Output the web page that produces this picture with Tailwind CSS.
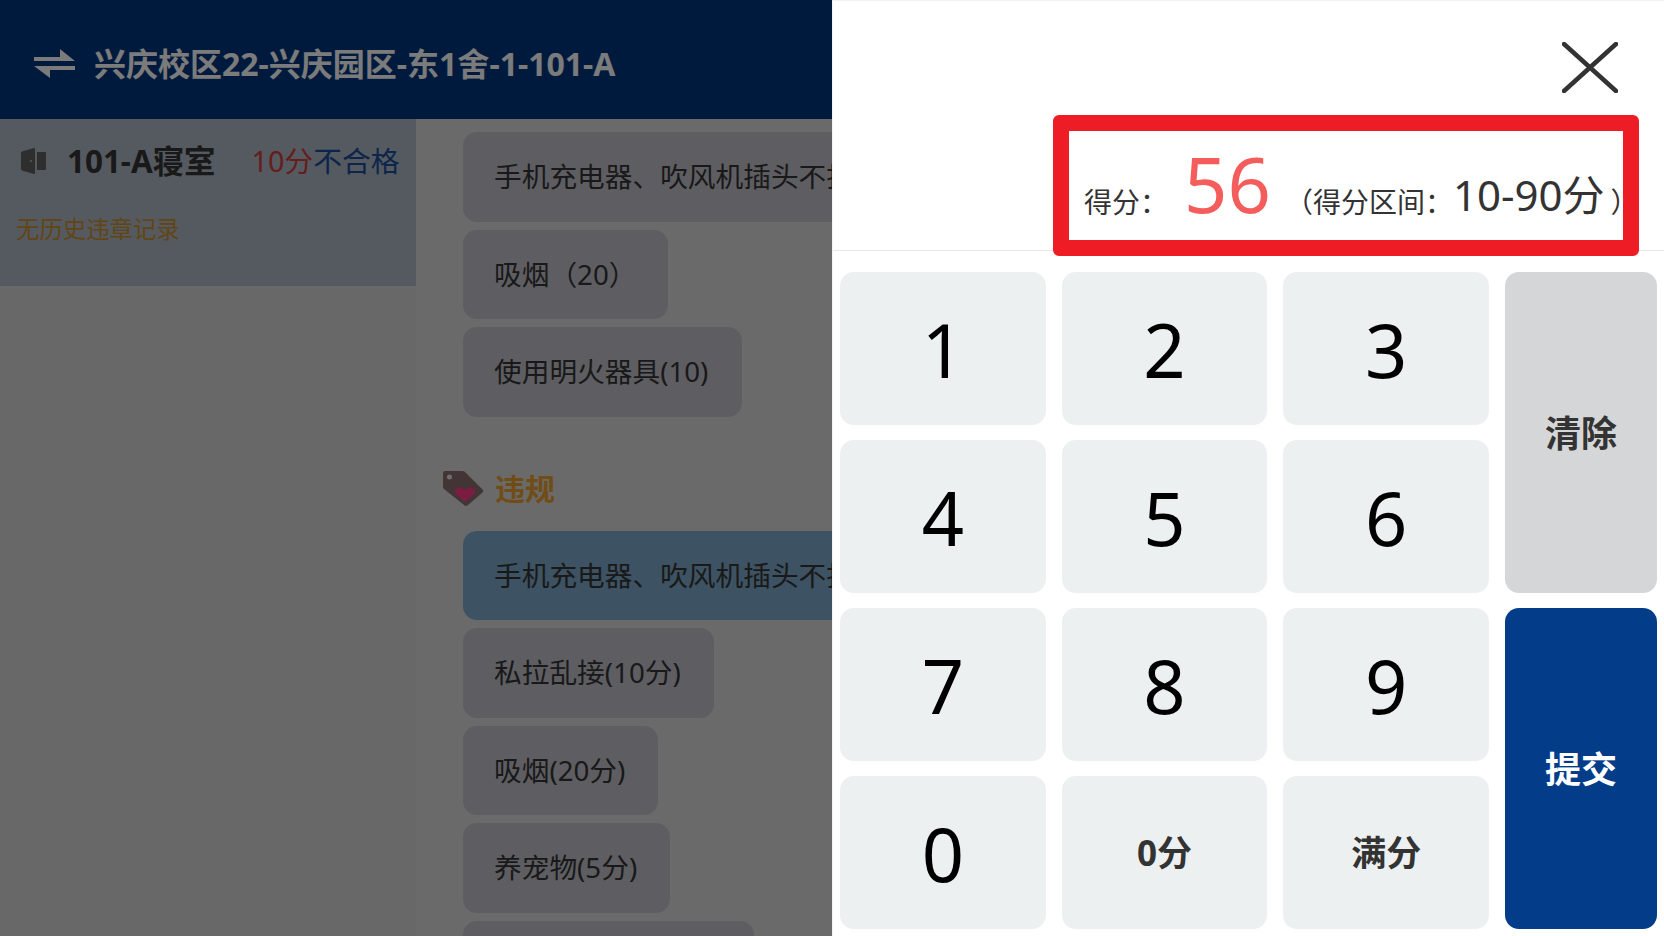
<!DOCTYPE html>
<html lang="zh-CN">
<head>
<meta charset="utf-8">
<title>打分</title>
<script src="https://cdn.jsdelivr.net/npm/@tailwindcss/browser@4"></script>
</head>
<body class="font-['Noto_Sans','Noto_Sans_CJK_SC',sans-serif]">
<div class="flex w-[1664px] h-[936px] overflow-hidden bg-white">
  <!-- dimmed page -->
  <div class="relative w-[832px] h-[936px] overflow-hidden shrink-0 bg-[#d0d0d0]">
    <header class="h-[119px] pt-[8px] bg-[#00347a] flex items-center pl-[34px] gap-[19px]">
      <svg width="41" height="29" viewBox="0 0 41 29" class="shrink-0"><path d="M0 8H26V0L41 12H0Z M0 17H41V21H16V29Z" fill="#f6f6f6"/></svg>
      <span class="text-[32px] font-bold text-[#f6f6f6] leading-none whitespace-nowrap">兴庆校区22-兴庆园区-东1舍-1-101-A</span>
    </header>
    <div class="flex h-[817px]">
      <aside class="w-[416px] shrink-0">
        <div class="h-[167px] bg-[#aab4c0] pl-[16px] pr-[16px]">
          <div class="flex items-center h-[84px] pl-[5px]">
            <svg width="25" height="26" viewBox="0 0 25 26" class="shrink-0"><path d="M0 5Q0 4 1 3.6L13 0Q14 0 14 1V25Q14 26 13 26L1 22.4Q0 22 0 21Z" fill="#5c5c5c"/><circle cx="10" cy="13" r="1" fill="#aab4c0"/><path d="M16 4H24Q25 4 25 5V21Q25 22 24 22H16Z" fill="#5c5c5c"/></svg>
            <span class="ml-[21px] text-[31.4px] font-bold text-[#333] whitespace-nowrap">101-A寝室</span>
            <span class="ml-[36px] text-[28.8px] whitespace-nowrap"><span class="text-[#c93c3c]">10分</span><span class="text-[#1c4a96]">不合格</span></span>
          </div>
          <p class="text-[23.4px] leading-[30px] mt-[11px] text-[#c48a28] whitespace-nowrap">无历史违章记录</p>
        </div>
      </aside>
      <main class="flex-1 min-w-0 overflow-hidden bg-[#d4d4d4] pl-[47px] pt-[13px] flex flex-col items-start">
        <div class="flex flex-col items-start gap-[8px] w-full shrink-0">
          <div class="h-[89.5px] shrink-0 flex items-center pt-[1px] pl-[31px] pr-[34px] rounded-[14px] bg-[#bcbcc4] text-[#333] text-[27.7px] whitespace-nowrap">手机充电器、吹风机插头不拔(5分)</div>
          <div class="h-[89.5px] shrink-0 flex items-center pt-[1px] pl-[31px] pr-[32px] rounded-[14px] bg-[#bcbcc4] text-[#333] text-[27.7px] whitespace-nowrap">吸烟（20）</div>
          <div class="h-[89.5px] shrink-0 flex items-center pt-[1px] pl-[31px] pr-[34px] rounded-[14px] bg-[#bcbcc4] text-[#333] text-[27.7px] whitespace-nowrap">使用明火器具(10)</div>
        </div>
        <div class="h-[114px] shrink-0 w-full pt-[30px] flex items-center -ml-[20px]">
          <svg width="41" height="36" viewBox="0 0 41 36" class="shrink-0"><path d="M2 0H19Q21 0 22 1L40 19Q41 20 39 22L25 34Q23 36 21 34L1 18Q0 17 0 16V2Q0 0 2 0Z" fill="#866a6a"/><circle cx="6.5" cy="6" r="2.5" fill="#dcdcdc"/><path d="M22 31L13 23Q11 20 13 18Q16 15 19 17L22 19L25 17Q28 15 31 18Q33 20 31 23Z" fill="#fa3884"/></svg>
          <span class="ml-[11px] text-[30px] font-bold text-[#e09a2c]">违规</span>
        </div>
        <div class="flex flex-col items-start gap-[8px] w-full shrink-0">
          <div class="h-[89.5px] shrink-0 flex items-center pt-[1px] pl-[31px] pr-[34px] rounded-[14px] bg-[#7aa4c4] text-[#333] text-[27.7px] whitespace-nowrap">手机充电器、吹风机插头不拔(5分)</div>
          <div class="h-[89.5px] shrink-0 flex items-center pt-[1px] pl-[31px] pr-[33px] rounded-[14px] bg-[#bcbcc4] text-[#333] text-[27.7px] whitespace-nowrap">私拉乱接(10分)</div>
          <div class="h-[89.5px] shrink-0 flex items-center pt-[1px] pl-[31px] pr-[33px] rounded-[14px] bg-[#bcbcc4] text-[#333] text-[27.7px] whitespace-nowrap">吸烟(20分)</div>
          <div class="h-[89.5px] shrink-0 flex items-center pt-[1px] pl-[31px] pr-[33px] rounded-[14px] bg-[#bcbcc4] text-[#333] text-[27.7px] whitespace-nowrap">养宠物(5分)</div>
          <div class="h-[89.5px] shrink-0 w-[291px] rounded-[14px] bg-[#bcbcc4]"></div>
        </div>
      </main>
    </div>
    <div class="absolute inset-0 bg-black/50"></div>
  </div>

  <!-- score panel -->
  <section class="relative w-[832px] h-[936px] shrink-0 bg-white border-l border-t border-[#f2f2f2]">
    <div class="h-[250px] border-b border-[#e8e8e8] flex flex-col">
      <div class="flex justify-end pt-[41px] pr-[46px]">
        <svg width="56" height="51" viewBox="0 0 56 51"><path d="M2 2L54 49M54 2L2 49" stroke="#333" stroke-width="4.5" stroke-linecap="round"/></svg>
      </div>
      <div class="flex items-baseline ml-[251px] mt-[53px] whitespace-nowrap text-[#333] text-[28px] leading-none">
        <span>得分：</span>
        <span class="ml-[16px] mr-[14px] text-[76px] leading-none text-[#f55c5c]">56</span>
        <span>（得分区间：</span><span class="text-[42px] leading-none -translate-y-[2px]">10-90分</span><span class="ml-[6px]">）</span>
      </div>
    </div>
    <div class="grid grid-cols-[1fr_1fr_1fr_152px] grid-rows-[repeat(4,153px)] gap-x-[16px] gap-y-[15px] px-[7px] pt-[21px]">
      <button class="rounded-[14px] bg-[#edf0f1] text-[74px] leading-none text-black pt-[3px]">1</button>
      <button class="rounded-[14px] bg-[#edf0f1] text-[74px] leading-none text-black pt-[3px]">2</button>
      <button class="rounded-[14px] bg-[#edf0f1] text-[74px] leading-none text-black pt-[3px]">3</button>
      <button class="row-span-2 rounded-[14px] bg-[#d5d6d8] text-[36px] font-bold text-[#333] pt-[2px]">清除</button>
      <button class="rounded-[14px] bg-[#edf0f1] text-[74px] leading-none text-black pt-[3px]">4</button>
      <button class="rounded-[14px] bg-[#edf0f1] text-[74px] leading-none text-black pt-[3px]">5</button>
      <button class="rounded-[14px] bg-[#edf0f1] text-[74px] leading-none text-black pt-[3px]">6</button>
      <button class="rounded-[14px] bg-[#edf0f1] text-[74px] leading-none text-black pt-[3px]">7</button>
      <button class="rounded-[14px] bg-[#edf0f1] text-[74px] leading-none text-black pt-[3px]">8</button>
      <button class="rounded-[14px] bg-[#edf0f1] text-[74px] leading-none text-black pt-[3px]">9</button>
      <button class="row-span-2 rounded-[14px] bg-[#033d8a] text-[36px] font-bold text-white pt-[2px]">提交</button>
      <button class="rounded-[14px] bg-[#edf0f1] text-[74px] leading-none text-black pt-[3px]">0</button>
      <button class="rounded-[14px] bg-[#edf0f1] text-[35px] font-bold text-[#333] pt-[2px]">0分</button>
      <button class="rounded-[14px] bg-[#edf0f1] text-[35px] font-bold text-[#333] pt-[2px]">满分</button>
    </div>
    <div class="absolute left-[220px] top-[114px] w-[586px] h-[141px] border-[16px] border-[#ee1c25] rounded-[6px]"></div>
  </section>
</div>
</body>
</html>
